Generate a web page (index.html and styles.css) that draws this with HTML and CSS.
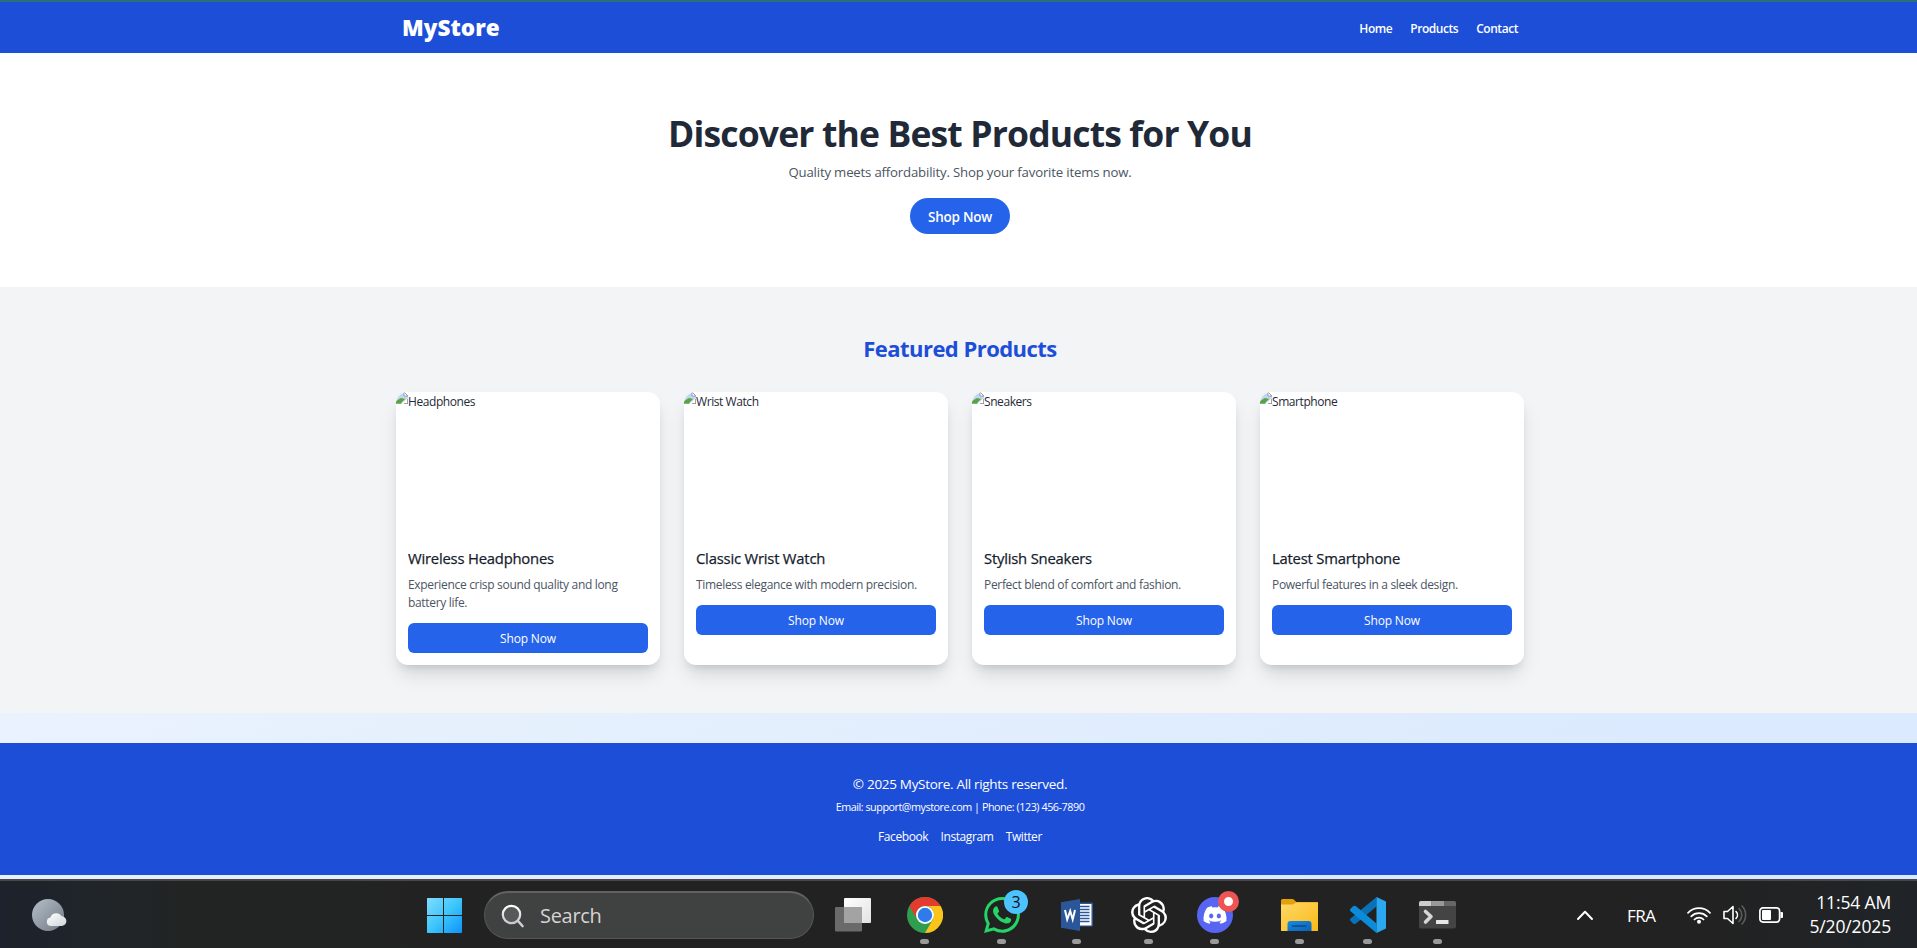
FILE: index.html
```html
<!DOCTYPE html>
<html lang="en">
<head>
<meta charset="utf-8">
<title>MyStore</title>
<link rel="stylesheet" href="styles.css">
</head>
<body>
<div class="page">
  <header class="header">
    <div class="header-inner">
      <div class="logo"><span>MyStore</span></div>
      <nav class="nav"><a>Home</a><a>Products</a><a>Contact</a></nav>
    </div>
  </header>
  <section class="hero">
    <h1 class="hero-title"><span>Discover the Best Products for You</span></h1>
    <p class="hero-sub"><span>Quality meets affordability. Shop your favorite items now.</span></p>
    <a class="hero-btn"><span>Shop Now</span></a>
  </section>
  <section class="featured">
    <h2 class="featured-title"><span>Featured Products</span></h2>
    <div class="cards">
      <article class="card">
        <div class="thumb"><svg class="broken" viewBox="0 0 12 12"><path d="M0 0h8l4 4v8H0z" fill="#c3d3f3"/><path d="M8 0v4h4z" fill="#fff" stroke="#8a8f98" stroke-width=".8"/><path d="M0 11V9l5-3 4 1-4 4z" fill="#56a83a"/><path d="M5 12l7-6v6z" fill="#fff"/><path d="M0 11.6h5.5M8 11.6h4M11.6 7v5" stroke="#8a8f98" stroke-width=".9"/></svg><span class="alt">Headphones</span></div>
        <div class="body"><h3 class="name"><span>Wireless Headphones</span></h3><p class="desc"><span>Experience crisp sound quality and long<br>battery life.</span></p><a class="btn"><span>Shop Now</span></a></div>
      </article>
      <article class="card">
        <div class="thumb"><svg class="broken" viewBox="0 0 12 12"><path d="M0 0h8l4 4v8H0z" fill="#c3d3f3"/><path d="M8 0v4h4z" fill="#fff" stroke="#8a8f98" stroke-width=".8"/><path d="M0 11V9l5-3 4 1-4 4z" fill="#56a83a"/><path d="M5 12l7-6v6z" fill="#fff"/><path d="M0 11.6h5.5M8 11.6h4M11.6 7v5" stroke="#8a8f98" stroke-width=".9"/></svg><span class="alt">Wrist Watch</span></div>
        <div class="body"><h3 class="name"><span>Classic Wrist Watch</span></h3><p class="desc"><span>Timeless elegance with modern precision.</span></p><a class="btn"><span>Shop Now</span></a></div>
      </article>
      <article class="card">
        <div class="thumb"><svg class="broken" viewBox="0 0 12 12"><path d="M0 0h8l4 4v8H0z" fill="#c3d3f3"/><path d="M8 0v4h4z" fill="#fff" stroke="#8a8f98" stroke-width=".8"/><path d="M0 11V9l5-3 4 1-4 4z" fill="#56a83a"/><path d="M5 12l7-6v6z" fill="#fff"/><path d="M0 11.6h5.5M8 11.6h4M11.6 7v5" stroke="#8a8f98" stroke-width=".9"/></svg><span class="alt">Sneakers</span></div>
        <div class="body"><h3 class="name"><span>Stylish Sneakers</span></h3><p class="desc"><span>Perfect blend of comfort and fashion.</span></p><a class="btn"><span>Shop Now</span></a></div>
      </article>
      <article class="card">
        <div class="thumb"><svg class="broken" viewBox="0 0 12 12"><path d="M0 0h8l4 4v8H0z" fill="#c3d3f3"/><path d="M8 0v4h4z" fill="#fff" stroke="#8a8f98" stroke-width=".8"/><path d="M0 11V9l5-3 4 1-4 4z" fill="#56a83a"/><path d="M5 12l7-6v6z" fill="#fff"/><path d="M0 11.6h5.5M8 11.6h4M11.6 7v5" stroke="#8a8f98" stroke-width=".9"/></svg><span class="alt">Smartphone</span></div>
        <div class="body"><h3 class="name"><span>Latest Smartphone</span></h3><p class="desc"><span>Powerful features in a sleek design.</span></p><a class="btn"><span>Shop Now</span></a></div>
      </article>
    </div>
  </section>
  <footer class="footer">
    <p class="copy"><span>© 2025 MyStore. All rights reserved.</span></p>
    <p class="contact"><span>Email: support@mystore.com | Phone: (123) 456-7890</span></p>
    <div class="social"><a>Facebook</a><a>Instagram</a><a>Twitter</a></div>
  </footer>
</div>
<div class="taskbar">
  <svg class="ic weather" width="36" height="34" viewBox="0 0 36 34"><defs><linearGradient id="moon" x1="0" y1="0" x2="1" y2="1"><stop offset="0" stop-color="#b4bfca"/><stop offset="1" stop-color="#727b84"/></linearGradient><linearGradient id="cloud" x1="0" y1="0" x2="1" y2="1"><stop offset="0" stop-color="#fff"/><stop offset="1" stop-color="#cfd5da"/></linearGradient></defs><circle cx="16" cy="17" r="16" fill="url(#moon)"/><path d="M18.500 28a4.300 4.300 0 0 1 0-8.500 6 6 0 0 1 11-1.300 4.900 4.900 0 0 1 0 9.800z" fill="url(#cloud)"/></svg>
  <svg class="ic windows" width="36" height="36" viewBox="0 0 36 36"><defs><linearGradient id="win" gradientUnits="userSpaceOnUse" x1="0" y1="0" x2="36" y2="36"><stop offset="0" stop-color="#86dcff"/><stop offset=".5" stop-color="#3fc7fb"/><stop offset="1" stop-color="#0c93fb"/></linearGradient></defs><path d="M1.500 1H17v17H1V1.500zM18 1h17.500l.5.500V18H18zM1 19h16v17H1.500l-.5-.5zM18 19h18v16.500l-.5.500H18z" fill="url(#win)"/></svg>
  <div class="search">
    <svg width="24" height="24" viewBox="0 0 24 24"><defs><linearGradient id="lens" x1="0" y1="0" x2="0" y2="1"><stop offset="0" stop-color="#fff"/><stop offset="1" stop-color="#c4cad0"/></linearGradient></defs><circle cx="10.500" cy="10.500" r="8.700" fill="#fff" fill-opacity=".12" stroke="url(#lens)" stroke-width="2.200"/><path d="M17 17l4.500 5" stroke="#cdd2d8" stroke-width="2.600" stroke-linecap="round"/></svg>
    <span>Search</span>
  </div>
  <svg class="ic taskview" width="36" height="34" viewBox="0 0 36 34"><defs><linearGradient id="tv" x1="0" y1="0" x2="1" y2="1"><stop offset="0" stop-color="#fff"/><stop offset="1" stop-color="#e2e2e2"/></linearGradient></defs><rect x="9" y="0" width="27" height="25" rx="1" fill="url(#tv)"/><rect x="0" y="9" width="27" height="24.500" rx="1" fill="#6a6a6a"/><path d="M9 9h18v16H9z" fill="#a3a3a3"/></svg>
  <div class="app chrome">
    <svg width="36" height="36" viewBox="0 0 36 36"><circle cx="18" cy="18" r="18" fill="#2f9e4f"/><path d="M2.400 9A18 18 0 0 1 33.600 9H18a9 9 0 0 0-7.800 13.500z" fill="#e33b2e"/><path d="M33.600 9A18 18 0 0 1 18 36l7.800-13.500A9 9 0 0 0 18 9z" fill="#fcc419"/><circle cx="18" cy="18" r="9" fill="#fff"/><circle cx="18" cy="18" r="7.200" fill="#2f7bea"/></svg><i class="dot"></i>
  </div>
  <div class="app whatsapp">
    <svg width="36" height="36" viewBox="0 0 24 24"><path fill="#25d366" d="M17.472 14.382c-.297-.149-1.758-.867-2.030-.967-.273-.099-.471-.148-.670.150-.197.297-.767.966-.940 1.164-.173.199-.347.223-.644.075-.297-.150-1.255-.463-2.390-1.475-.883-.788-1.480-1.761-1.653-2.059-.173-.297-.018-.458.130-.606.134-.133.298-.347.446-.520.149-.174.198-.298.298-.497.099-.198.050-.371-.025-.520-.075-.149-.669-1.612-.916-2.207-.242-.579-.487-.500-.669-.510-.173-.008-.371-.010-.570-.010-.198 0-.520.074-.792.372-.272.297-1.040 1.016-1.040 2.479 0 1.462 1.065 2.875 1.213 3.074.149.198 2.096 3.200 5.077 4.487.709.306 1.262.489 1.694.625.712.227 1.360.195 1.871.118.571-.085 1.758-.719 2.006-1.413.248-.694.248-1.289.173-1.413-.074-.124-.272-.198-.570-.347m-5.421 7.403h-.004a9.870 9.870 0 0 1-5.031-1.378l-.361-.214-3.741.982.998-3.648-.235-.374a9.860 9.860 0 0 1-1.510-5.260c.001-5.450 4.436-9.884 9.888-9.884 2.640 0 5.122 1.030 6.988 2.898a9.825 9.825 0 0 1 2.893 6.994c-.003 5.450-4.437 9.884-9.885 9.884m8.413-18.297A11.815 11.815 0 0 0 12.050 0C5.495 0 .160 5.335.157 11.892c0 2.096.547 4.142 1.588 5.945L.057 24l6.305-1.654a11.882 11.882 0 0 0 5.683 1.448h.005c6.554 0 11.890-5.335 11.893-11.893a11.821 11.821 0 0 0-3.480-8.413z"/></svg><b class="badge">3</b><i class="dot"></i>
  </div>
  <div class="app word">
    <svg width="32" height="32" viewBox="0 0 32 32"><path d="M17 3.500h14a1 1 0 0 1 1 1v22a1 1 0 0 1-1 1H17z" fill="#2b579a"/><path d="M18 5h12.500v21.500H18z" fill="#fff"/><path d="M19 7.500h9.500M19 10.500h9.500M19 13.500h9.500M19 16.500h9.500M19 19.500h9.500M19 22.500h9.500" stroke="#2b579a" stroke-width="1.300"/><path d="M0 3.300L19 0v32L0 28.700z" fill="#2b579a"/><path d="M4 11l2.200 9.500L9.200 12l2.500 8.500L14 11" fill="none" stroke="#fff" stroke-width="2"/></svg><i class="dot"></i>
  </div>
  <div class="app gpt">
    <svg width="36" height="36" viewBox="0 0 24 24"><path fill="#fff" d="M22.2819 9.8211a5.9847 5.9847 0 0 0-.5157-4.9108 6.0462 6.0462 0 0 0-6.5098-2.9A6.0651 6.0651 0 0 0 4.9807 4.1818a5.9847 5.9847 0 0 0-3.9977 2.9 6.0462 6.0462 0 0 0 .7427 7.0966 5.98 5.98 0 0 0 .5110 4.9107 6.051 6.051 0 0 0 6.5146 2.9001A5.9847 5.9847 0 0 0 13.2599 24a6.0557 6.0557 0 0 0 5.7718-4.2058 5.9894 5.9894 0 0 0 3.9977-2.9001 6.0557 6.0557 0 0 0-.7475-7.0729zm-9.022 12.6081a4.4755 4.4755 0 0 1-2.8764-1.0408l.1419-.0804 4.7783-2.7582a.7948.7948 0 0 0 .3927-.6813v-6.7369l2.02 1.1686a.071.071 0 0 1 .038.052v5.5826a4.504 4.504 0 0 1-4.4945 4.4944zm-9.6607-4.1254a4.4708 4.4708 0 0 1-.5346-3.0137l.142.0852 4.783 2.7582a.7712.7712 0 0 0 .7806 0l5.8428-3.3685v2.3324a.0804.0804 0 0 1-.0332.0615L9.74 19.9502a4.4992 4.4992 0 0 1-6.1408-1.6464zM2.3408 7.8956a4.485 4.485 0 0 1 2.3655-1.9728V11.6a.7664.7664 0 0 0 .3879.6765l5.8144 3.3543-2.0201 1.1685a.0757.0757 0 0 1-.071 0l-4.8303-2.7865A4.504 4.504 0 0 1 2.3408 7.872zm16.5963 3.8558L13.1038 8.364 15.1192 7.2a.0757.0757 0 0 1 .071 0l4.8303 2.7913a4.4944 4.4944 0 0 1-.6765 8.1042v-5.6772a.79.79 0 0 0-.407-.667zm2.0107-3.0231l-.142-.0852-4.7735-2.7818a.7759.7759 0 0 0-.7854 0L9.409 9.2297V6.8974a.0662.0662 0 0 1 .0284-.0615l4.8303-2.7866a4.4992 4.4992 0 0 1 6.6802 4.66zM8.3065 12.863l-2.02-1.1638a.0804.0804 0 0 1-.038-.0567V6.0742a4.4992 4.4992 0 0 1 7.3757-3.4537l-.142.0805L8.704 5.459a.7948.7948 0 0 0-.3927.6813zm1.0976-2.3654l2.602-1.4998 2.6069 1.4998v2.9994l-2.5974 1.4997-2.6067-1.4997Z"/></svg><i class="dot"></i>
  </div>
  <div class="app discord">
    <svg width="36" height="36" viewBox="0 0 36 36"><circle cx="18" cy="18" r="18" fill="#5865f2"/><path transform="translate(6.500 6.500) scale(.96)" fill="#fff" d="M20.317 4.370a19.791 19.791 0 0 0-4.885-1.515.074.074 0 0 0-.079.037c-.210.375-.444.865-.608 1.250a18.270 18.270 0 0 0-5.487 0 12.640 12.640 0 0 0-.618-1.250.077.077 0 0 0-.079-.037A19.736 19.736 0 0 0 3.677 4.370a.070.070 0 0 0-.032.028C.533 9.046-.319 13.580.099 18.058a.082.082 0 0 0 .031.056 19.900 19.900 0 0 0 5.993 3.030.078.078 0 0 0 .084-.028c.462-.630.874-1.295 1.226-1.994a.076.076 0 0 0-.042-.106 13.107 13.107 0 0 1-1.872-.892.077.077 0 0 1-.008-.128c.126-.094.252-.192.372-.291a.074.074 0 0 1 .078-.010c3.928 1.793 8.180 1.793 12.061 0a.074.074 0 0 1 .079.009c.120.099.245.198.372.292a.077.077 0 0 1-.006.128c-.598.349-1.220.645-1.873.891a.077.077 0 0 0-.041.107c.360.698.772 1.363 1.225 1.993a.076.076 0 0 0 .084.029 19.839 19.839 0 0 0 6.002-3.030.077.077 0 0 0 .032-.055c.500-5.177-.838-9.674-3.549-13.660a.061.061 0 0 0-.031-.029zM8.020 15.331c-1.183 0-2.157-1.086-2.157-2.419s.955-2.419 2.157-2.419c1.211 0 2.176 1.095 2.157 2.419 0 1.333-.956 2.419-2.157 2.419zm7.974 0c-1.182 0-2.157-1.086-2.157-2.419s.955-2.419 2.157-2.419c1.211 0 2.176 1.095 2.157 2.419 0 1.333-.946 2.419-2.157 2.419z"/></svg><b class="badge-rec"></b><i class="dot"></i>
  </div>
  <div class="app folder">
    <svg width="37" height="33" viewBox="0 0 37 33"><defs><linearGradient id="fold" x1="0" y1="0" x2="1" y2="1"><stop offset="0" stop-color="#ffd969"/><stop offset="1" stop-color="#f9b916"/></linearGradient><linearGradient id="pocket" x1="0" y1="0" x2="1" y2="1"><stop offset="0" stop-color="#1a8ae0"/><stop offset="1" stop-color="#0a62b8"/></linearGradient></defs><path d="M0 1.500A1.500 1.500 0 0 1 1.500 0H12l3.500 3H36a1 1 0 0 1 1 1v6H0z" fill="#e3a008"/><path d="M0 5.500h11.500L15.500 3.500H37V32H0z" fill="url(#fold)"/><path d="M6.500 32V25a3 3 0 0 1 3-3h18a3 3 0 0 1 3 3v7z" fill="url(#pocket)"/><path d="M11.500 27h13.500" stroke="#0a4a8c" stroke-width="1.600" stroke-linecap="round"/></svg><i class="dot"></i>
  </div>
  <div class="app vscode">
    <svg width="36" height="36" viewBox="0 0 36 36"><path d="M26.500 0v9.500L6 26.500a2.500 2.500 0 0 1-3 0L.800 24.300a2 2 0 0 1 0-3z" fill="#0a70b8"/><path d="M26.500 36v-9.500L6 9.300a2.500 2.500 0 0 0-3 0L.800 11.400a2 2 0 0 0 0 3z" fill="#0d8bdb"/><path d="M26.500 0L36 4.500v27L26.500 36z" fill="#2aa9f2"/></svg><i class="dot"></i>
  </div>
  <div class="app terminal">
    <svg width="37" height="28" viewBox="0 0 37 28"><rect width="37" height="27.500" rx="2" fill="#444"/><path d="M0 5V2a2 2 0 0 1 2-2h10.500v5z" fill="#ccc"/><path d="M12.500 0H25v5H12.500z" fill="#999"/><path d="M25 0h10a2 2 0 0 1 2 2v3H25z" fill="#666"/><path d="M6.500 10.500l5.500 5-5.500 5.500" fill="none" stroke="#d6d6d6" stroke-width="3.600" stroke-linecap="round" stroke-linejoin="round"/><rect x="17" y="19" width="12.500" height="4" rx=".5" fill="#e6e6e6"/></svg><i class="dot"></i>
  </div>
  <svg class="ic chevron" width="18" height="12" viewBox="0 0 18 12"><path d="M2 10l7-7.200L16 10" fill="none" stroke="#fff" stroke-width="2" stroke-linecap="round" stroke-linejoin="round"/></svg>
  <span class="lang">FRA</span>
  <svg class="ic wifi" width="24" height="18" viewBox="0 0 24 18"><g fill="none" stroke="#fff" stroke-width="1.700" stroke-linecap="round"><path d="M1 6.800a15.500 15.500 0 0 1 22 0"/><path d="M4.200 10.300a11 11 0 0 1 15.600 0"/><path d="M7.400 13.500a6.500 6.500 0 0 1 9.200 0"/></g><circle cx="12" cy="15.700" r="2" fill="#fff"/></svg>
  <svg class="ic volume" width="24" height="20" viewBox="0 0 24 20"><g fill="none" stroke-width="1.600" stroke-linecap="round" stroke-linejoin="round"><path d="M1 6.500h3.500L10 1.500v17L4.500 13.500H1z" stroke="#fff"/><path d="M13 6.500a5 5 0 0 1 0 7" stroke="#fff"/><path d="M16 3.500a9 9 0 0 1 0 13M19 1a13 13 0 0 1 0 18" stroke="#5c5c5c"/></g></svg>
  <svg class="ic battery" width="24" height="16" viewBox="0 0 24 16"><rect x=".9" y=".9" width="19.700" height="14.200" rx="3" fill="none" stroke="#fff" stroke-width="1.700"/><rect x="3" y="3" width="9" height="10" rx="1" fill="#fff"/><path d="M21.500 5H23a1 1 0 0 1 1 1v4a1 1 0 0 1-1 1h-1.500z" fill="#fff"/></svg>
  <div class="clock"><span>11:54 AM</span><span>5/20/2025</span></div>
</div>
</body>
</html>
```
FILE: styles.css
```css
* { box-sizing: border-box; margin: 0; padding: 0; }
html, body { width: 100%; height: 948px; overflow: hidden; }
body { font-family: "Open Sans", "Noto Sans", sans-serif; font-size: 12px; line-height: 18px; color: #1f2937; }
.page { width: 1920px; height: 879px; border-top: 2px solid #27707c; background: linear-gradient(to bottom right, #f5f9ff, #e4effd 60%, #dbeafe 85%); }
.header { height: 51px; background: #1d4ed8; color: #fff; }
.header-inner { width: 1152px; height: 51px; margin: 0 auto; padding: 0 18px; display: flex; align-items: center; justify-content: space-between; }
.logo { font-size: 22.5px; font-weight: 800; line-height: 30px; }
.nav { display: flex; gap: 18px; font-weight: 600; padding-top: 3px; letter-spacing: -.45px; }
.hero { height: 234px; background: #fff; padding-top: 62px; display: flex; flex-direction: column; align-items: center; }
.hero-title { font-size: 35.5px; line-height: 36px; font-weight: 700; letter-spacing: -.85px; }
.hero-sub { margin-top: 11px; font-size: 13.2px; line-height: 21px; color: #4b5563; letter-spacing: -.18px; }
.hero-btn { margin-top: 15px; width: 100px; height: 36px; border-radius: 18px; background: #2563eb; color: #fff; font-size: 13.5px; font-weight: 600; line-height: 38px; text-align: center; letter-spacing: -.25px; }
.featured { height: 426px; background: #f3f4f6; padding-top: 48px; }
.featured-title { font-size: 22px; line-height: 27px; font-weight: 700; color: #1d4ed8; text-align: center; letter-spacing: -.54px; }
.cards { margin: 30px auto 0; width: 1128px; display: grid; grid-template-columns: repeat(4, 264px); gap: 24px; }
.card { height: 273px; border-radius: 12px; background: #fff; overflow: hidden; box-shadow: 0 12px 19px -3px rgba(0,0,0,.12), 0 6px 9px -4px rgba(0,0,0,.12); }
.thumb { height: 144px; display: flex; align-items: flex-start; }
.broken { width: 12px; height: 12px; flex: none; }
.alt { line-height: 19px; letter-spacing: -.42px; }
.body { padding: 12px; }
.name { font-size: 14.8px; line-height: 21px; font-weight: 500; margin-bottom: 6px; color: #111827; letter-spacing: -.2px; -webkit-text-stroke: .25px #1f2937; }
.desc { color: #4b5563; letter-spacing: -.32px; padding-top: 1px; margin-bottom: -1px; }
.btn { display: block; margin-top: 12px; height: 30px; border-radius: 6px; background: #2563eb; color: #fff; line-height: 31px; text-align: center; letter-spacing: -.17px; }
.footer { margin-top: 30px; height: 132px; padding-top: 31px; background: #1d4ed8; color: #fff; text-align: center; }
.copy { font-size: 13.5px; line-height: 21px; letter-spacing: -.31px; }
.contact { margin-top: 4px; font-size: 10.8px; line-height: 16px; letter-spacing: -.47px; }
.social { margin-top: 13px; display: flex; justify-content: center; gap: 12.4px; letter-spacing: -.42px; }
.taskbar { height: 69px; border-top: 2px solid #474747; background: linear-gradient(to right, #1d222c, #20252a 90px, #222423 200px, #222 500px, #222 1700px, #202428); display: flex; align-items: flex-start; color: #fff; }
.taskbar svg { display: block; flex: none; }
.weather { margin: 17px 0 0 32px; }
.windows { margin: 16px 0 0 358px; }
.search { margin: 10px 0 0 22px; width: 330px; height: 48px; border-radius: 24px; background: #404141; border: 1px solid #545555; border-top: 2px solid #626262; display: flex; align-items: center; padding-left: 16px; gap: 15px; font-size: 20px; line-height: 28px; color: #d4d4d4; letter-spacing: -.3px; }
.taskview { margin: 17px 0 0 21px; }
.app { position: relative; height: 67px; padding-top: 16px; flex: none; }
.dot { position: absolute; left: 50%; bottom: 4px; width: 9px; height: 5px; margin-left: -5px; border-radius: 3px; background: #9a9a9a; }
.chrome { margin-left: 36px; }
.whatsapp { margin-left: 41px; }
.word { margin-left: 41px; padding-top: 18px; }
.gpt { margin-left: 38px; }
.discord { margin-left: 30px; }
.folder { margin-left: 48px; padding-top: 18px; }
.vscode { margin-left: 32px; }
.terminal { margin-left: 33px; padding-top: 20px; }
.badge { position: absolute; left: 20px; top: 9px; width: 24px; height: 24px; border-radius: 12px; background: #4cc2ff; color: #111; font-size: 16px; font-weight: 400; line-height: 24px; text-align: center; }
.badge-rec { position: absolute; left: 21px; top: 10px; width: 21px; height: 21px; border-radius: 11px; background: #fff; border: 6px solid #ed5555; }
.chevron { margin: 28px 0 0 120px; }
.lang { margin: 24px 0 0 33px; width: 31px; font-size: 17px; line-height: 22px; letter-spacing: -.5px; }
.wifi { margin: 25px 0 0 29px; }
.volume { margin: 24px 0 0 12px; }
.battery { margin: 26px 0 0 12px; }
.clock { margin: 9px 0 0 auto; padding-right: 26px; font-size: 17.5px; line-height: 24px; display: flex; flex-direction: column; align-items: flex-end; letter-spacing: -.15px; }
```
